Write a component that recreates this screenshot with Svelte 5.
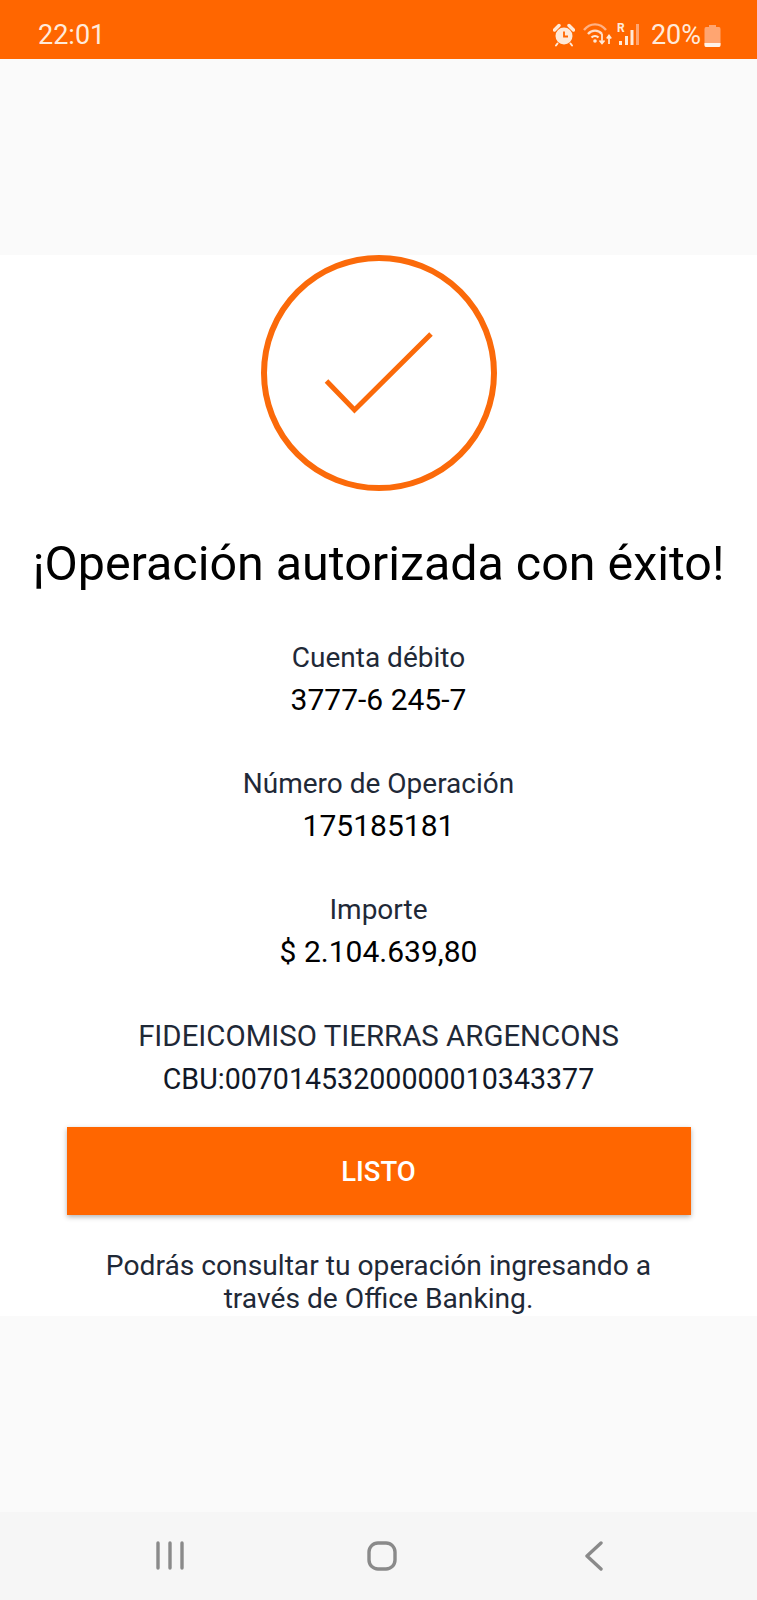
<script lang="ts">
    const details = [
        { label: "Cuenta débito", value: "3777-6 245-7" },
        { label: "Número de Operación", value: "175185181" },
        { label: "Importe", value: "$ 2.104.639,80" },
    ];
</script>

<div class="screen">
    <header class="status">
        <span class="time">22:01</span>
        <div class="status-icons">
            <svg class="alarm" width="22" height="24" viewBox="0 0 22 24">
                <circle cx="11" cy="13" r="8.5" fill="#ffe9d8" />
                <path d="M1.5 7 L6 2.5 M20.5 7 L16 2.5" stroke="#ffe9d8" stroke-width="3.4" stroke-linecap="round" />
                <path d="M4.5 20.5 L3 22.5 M17.5 20.5 L19 22.5" stroke="#ffe9d8" stroke-width="2" stroke-linecap="round" />
                <path d="M11 8.5 V13.5 H15" fill="none" stroke="#ff6600" stroke-width="1.8" />
            </svg>
            <svg class="wifi" width="30" height="24" viewBox="0 0 30 24">
                <path d="M1 7 C7 -0.5 17 -0.5 23 7" fill="none" stroke="#ffb184" stroke-width="2.4" />
                <path d="M5 11 C9 6.5 15 6.5 19 11" fill="none" stroke="#ffdcc6" stroke-width="2.4" />
                <path d="M8.5 14.5 C10.5 12.5 13.5 12.5 15.5 14.5" fill="none" stroke="#ffe9d8" stroke-width="2.2" />
                <circle cx="12" cy="18" r="1.8" fill="#ffe9d8" />
                <path d="M19 11 V20 M16.5 17.5 L19 20.5 L21.5 17.5" fill="none" stroke="#ffe9d8" stroke-width="1.7" />
                <path d="M26 21 V13 M23.8 15.5 L26 12.5 L28.2 15.5" fill="none" stroke="#ffe9d8" stroke-width="1.7" />
            </svg>
            <div class="signal">
                <span class="roaming">R</span>
                <svg width="23" height="24" viewBox="0 0 23 24">
                    <rect x="2" y="18" width="3" height="4" fill="#ffe9d8" />
                    <rect x="8" y="13" width="3" height="9" fill="#ffe9d8" />
                    <rect x="13.5" y="7" width="3" height="15" fill="#ffe9d8" />
                    <rect x="19" y="1" width="3" height="21" fill="#ffa571" />
                </svg>
            </div>
            <span class="battery-text">20%</span>
            <svg class="battery" width="17" height="25" viewBox="0 0 17 25">
                <path d="M5 2 H12 V4 H15 Q16.5 4 16.5 6 V22 Q16.5 24 15 24 H2 Q0.5 24 0.5 22 V6 Q0.5 4 2 4 H5 Z" fill="#ffa571" />
                <path d="M0.5 20 H16.5 V22 Q16.5 24 15 24 H2 Q0.5 24 0.5 22 Z" fill="#fff3ea" />
            </svg>
        </div>
    </header>

    <div class="spacer-top"></div>

    <main class="content">
        <svg class="success" width="236" height="236" viewBox="0 0 236 236">
            <circle cx="118" cy="118" r="115" fill="none" stroke="#fb6a0a" stroke-width="6" />
            <path d="M65.5 126 L93.5 155 L170 79" fill="none" stroke="#fb6a0a" stroke-width="5" />
        </svg>

        <h1>¡Operación autorizada con éxito!</h1>

        <div class="details">
            {#each details as item (item.label)}
                <div class="detail">
                    <p class="label">{item.label}</p>
                    <p class="value">{item.value}</p>
                </div>
            {/each}
            <div class="detail last">
                <p class="label wide">FIDEICOMISO TIERRAS ARGENCONS</p>
                <p class="value dark">CBU:00701453200000010343377</p>
            </div>
        </div>

        <button class="done">LISTO</button>

        <p class="note">Podrás consultar tu operación ingresando a<br />través de Office Banking.</p>
    </main>

    <div class="spacer-bottom"></div>

    <nav class="navbar">
        <svg width="30" height="30" viewBox="0 0 30 30">
            <path d="M3 2 V27 M15 2 V27 M27 2 V27" stroke="#8a8a8a" stroke-width="3.4" stroke-linecap="round" />
        </svg>
        <svg class="home" width="32" height="32" viewBox="0 0 32 32">
            <rect x="3" y="3" width="26" height="26" rx="9" fill="none" stroke="#8a8a8a" stroke-width="3.4" />
        </svg>
        <svg width="20" height="30" viewBox="0 0 20 30">
            <path d="M17 2 L3 15 L17 28" fill="none" stroke="#8a8a8a" stroke-width="3.4" stroke-linecap="round" stroke-linejoin="round" />
        </svg>
    </nav>
</div>

<style>
    :global(body) {
        margin: 0;
        background: #fafafa;
    }

    .screen {
        width: 757px;
        height: 1600px;
        display: flex;
        flex-direction: column;
        font-family: Roboto, "Liberation Sans", sans-serif;
        overflow: hidden;
    }

    .status {
        height: 59px;
        flex: none;
        background: #ff6600;
        color: #ffeadb;
        display: flex;
        align-items: center;
        justify-content: space-between;
        padding: 11px 36px 0 38px;
        box-sizing: border-box;
    }

    .time {
        font-size: 27px;
    }

    .status-icons {
        display: flex;
        align-items: center;
    }

    .alarm {
        margin-right: 8px;
    }

    .wifi {
        margin-right: 4px;
    }

    .signal {
        position: relative;
        width: 23px;
        height: 24px;
        margin-right: 11px;
    }

    .signal svg {
        display: block;
    }

    .roaming {
        position: absolute;
        left: 0;
        top: -2px;
        font-size: 12px;
        font-weight: 700;
    }

    .battery-text {
        font-size: 27px;
        margin-right: 3px;
    }

    .spacer-top {
        height: 196px;
        flex: none;
    }

    .content {
        height: 1061px;
        flex: none;
        background: #fff;
        display: flex;
        flex-direction: column;
        align-items: center;
        box-sizing: border-box;
    }

    .success {
        display: block;
        flex: none;
    }

    h1 {
        margin: 46px 0 0;
        font-size: 48.4px;
        line-height: 54px;
        font-weight: 400;
        color: #000;
        white-space: nowrap;
    }

    .details {
        margin-top: 45px;
        display: flex;
        flex-direction: column;
        gap: 41px;
        text-align: center;
    }

    .detail p {
        margin: 0;
        line-height: 43px;
        white-space: nowrap;
    }

    .detail .value {
        margin-top: -1px;
    }

    .detail.last {
        margin-top: 1px;
    }

    .label {
        color: #1f2937;
        font-size: 28px;
    }

    .label.wide {
        font-size: 29.4px;
    }

    .value {
        color: #000;
        font-size: 30px;
    }

    .detail .value.dark {
        margin-top: 0;
        color: #111827;
        font-size: 28.6px;
    }

    .done {
        margin-top: 26px;
        width: 624px;
        height: 88px;
        flex: none;
        border: none;
        border-radius: 0;
        background: #ff6600;
        color: #fff;
        font-family: inherit;
        font-size: 27.5px;
        font-weight: 500;
        box-shadow: 0 2px 5px rgba(0, 0, 0, 0.3);
    }

    .note {
        margin: 34px 0 0;
        font-size: 28.2px;
        line-height: 33px;
        color: #1f2937;
        text-align: center;
    }

    .spacer-bottom {
        flex: 1;
    }

    .navbar {
        height: 88px;
        flex: none;
        background: #f6f6f6;
        display: flex;
        align-items: center;
        justify-content: space-between;
        padding: 0 153px 0 155px;
        box-sizing: border-box;
    }

    .home {
        margin-right: 6px;
    }
</style>
